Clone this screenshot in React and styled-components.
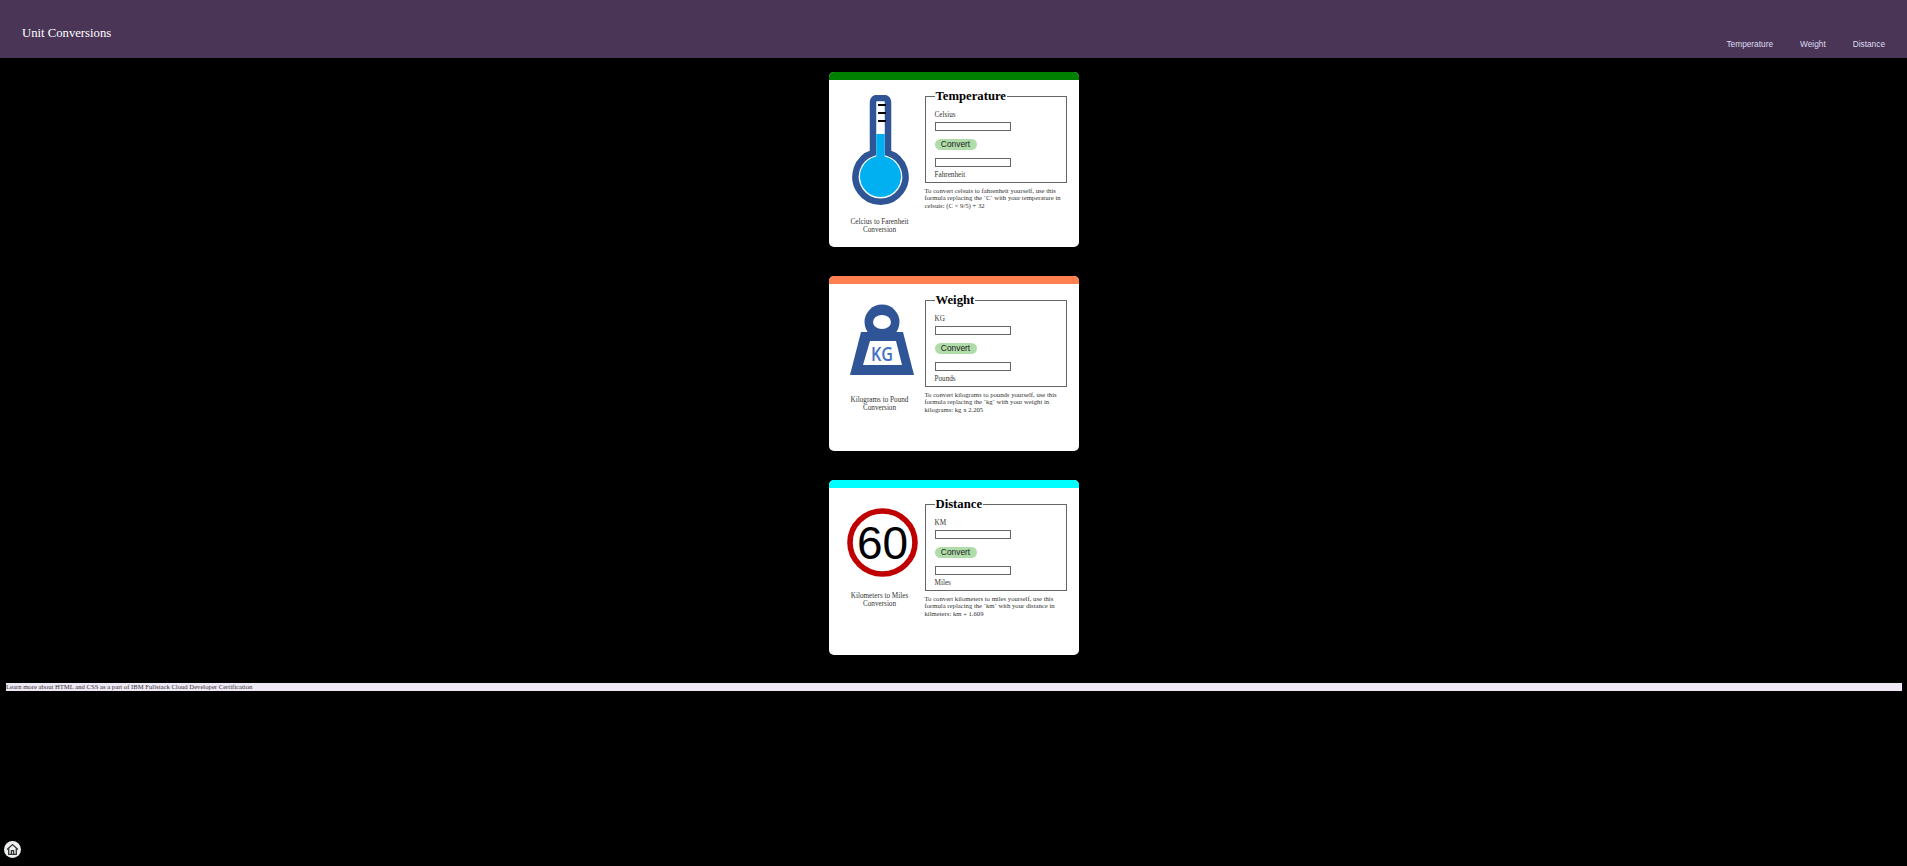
import React from 'react';
import styled, { createGlobalStyle } from 'styled-components';

const GlobalStyle = createGlobalStyle`
  html, body {
    margin: 0;
    padding: 0;
    background: #000;
    font-family: "Liberation Serif", serif;
  }
`;

const Page = styled.div`
  min-height: 866px;
  background: #000;
`;

const Header = styled.header`
  display: flex;
  justify-content: space-between;
  height: 58px;
  padding: 0 22px;
  box-sizing: border-box;
  background: #4b3557;
`;

const Title = styled.h1`
  margin: 25px 0 0;
  font-size: 12.7px;
  line-height: 16px;
  font-weight: normal;
  color: #fff;
`;

const Nav = styled.nav`
  display: flex;
  gap: 27px;
  padding-top: 39px;
`;

const NavLink = styled.a`
  font-family: "Liberation Sans", sans-serif;
  font-size: 8.3px;
  line-height: 11px;
  color: #dcdcf0;
`;

const Main = styled.main`
  display: flex;
  flex-direction: column;
  align-items: center;
  gap: 29px;
  padding-top: 14px;
`;

const Card = styled.section`
  width: 250px;
  height: 175px;
  border-radius: 5px;
  overflow: hidden;
  background: #fff;
`;

const CardBar = styled.div`
  height: 8px;
  background: ${(p) => p.$color};
`;

const CardBody = styled.div`
  display: grid;
  grid-template-columns: 96px 142px;
  padding-top: 9px;
`;

const IconColumn = styled.div`
  display: flex;
  flex-direction: column;
  align-items: center;
  padding-left: 6px;
  padding-top: ${(p) => p.$top}px;
`;

const IconFrame = styled.div`
  display: flex;
  margin-left: ${(p) => p.$shift}px;
`;

const Caption = styled.p`
  width: 70px;
  margin: ${(p) => p.$gap}px 0 0;
  font-size: 7.2px;
  line-height: 8px;
  text-align: center;
  color: #333;
`;

const FormColumn = styled.div`
  display: flex;
  flex-direction: column;
`;

const Fields = styled.fieldset`
  display: flex;
  flex-direction: column;
  align-items: flex-start;
  height: 94px;
  margin: 0;
  padding: 0 0 0 9px;
  box-sizing: border-box;
  border: 1px solid #666;
`;

const Legend = styled.legend`
  padding: 0 1px;
  font-size: 12.7px;
  line-height: 15px;
  font-weight: bold;
  color: #000;
`;

const FieldLabel = styled.label`
  font-size: 7.2px;
  line-height: 8px;
  color: #333;
  margin-top: ${(p) => p.$top}px;
`;

const Field = styled.input`
  display: block;
  width: 76px;
  height: 9px;
  margin-top: ${(p) => p.$top}px;
  padding: 0;
  box-sizing: border-box;
  border: 1px solid #666;
  background: #fff;
`;

const ConvertButton = styled.button`
  width: 42px;
  height: 10.5px;
  margin-top: 8px;
  padding: 0;
  border: 0;
  border-radius: 6px;
  background: #b0dcaa;
  font-family: "Liberation Sans", sans-serif;
  font-size: 8.4px;
  line-height: 10.5px;
  color: #222;
`;

const Help = styled.p`
  margin: 4px 0 0;
  font-size: 6.7px;
  line-height: 7.3px;
  color: #333;
`;

const Footer = styled.footer`
  margin: 28px 5px 0 6px;
  background: #efe8f5;
  font-size: 6.66px;
  line-height: 8px;
  color: #333;
`;

const HomeButton = styled.div`
  position: fixed;
  left: 4px;
  bottom: 8px;
  display: flex;
  align-items: center;
  justify-content: center;
  width: 17px;
  height: 17px;
  border-radius: 50%;
  background: #eef1ef;
`;

function Thermometer() {
  return (
    <svg width="58" height="111" viewBox="0 0 58 111">
      <path
        d="M21 57.85V7a4 4 0 0 1 4-4h7a4 4 0 0 1 4 4V57.85A25 25 0 1 1 21 57.85z"
        fill="#fff"
        stroke="#2f5597"
        strokeWidth="6.5"
      />
      <path d="M24.25 39h8.5V61.5A20.5 20.5 0 1 1 24.25 61.5z" fill="#00b0f0" />
      <path d="M26 10h8M26 18h8M26 26h8" stroke="#000" strokeWidth="2" />
    </svg>
  );
}

function WeightIcon() {
  return (
    <svg width="64" height="71" viewBox="0 0 64 71">
      <circle cx="32" cy="18" r="17.5" fill="#2f5597" />
      <ellipse cx="32" cy="18" rx="9" ry="7" fill="#fff" />
      <path d="M11 28h42l11 43H0z" fill="#2f5597" />
      <path d="M20 37h26l6 24H13z" fill="#fff" />
      <text x="32" y="56.7" textAnchor="middle" fontFamily="Open Sans, sans-serif" fontWeight="600" fontSize="20" textLength="22" lengthAdjust="spacingAndGlyphs" fill="#4472c4">KG</text>
    </svg>
  );
}

function SpeedSign() {
  return (
    <svg width="71" height="69" viewBox="0 0 71 69">
      <ellipse cx="35.5" cy="34.5" rx="32.5" ry="31.5" fill="#fff" stroke="#c00000" strokeWidth="5.6" />
      <text x="35.5" y="50.5" textAnchor="middle" fontFamily="Liberation Sans, sans-serif" fontSize="46" fill="#000">60</text>
    </svg>
  );
}

const cards = [
  {
    color: '#008000',
    iconTop: 6,
    iconShift: 2,
    icon: <Thermometer />,
    captionGap: 12,
    caption: 'Celcius to Farenheit Conversion',
    legend: 'Temperature',
    from: 'Celsius',
    to: 'Fahrenheit',
    help: 'To convert celsuis to fahrenheit yourself, use this formula replacing the `C` with your temperature in celsuis: (C × 9/5) + 32',
  },
  {
    color: '#ff7f50',
    iconTop: 11,
    iconShift: 5,
    icon: <WeightIcon />,
    captionGap: 21,
    caption: 'Kilograms to Pound Conversion',
    legend: 'Weight',
    from: 'KG',
    to: 'Pounds',
    help: 'To convert kilograms to pounds yourself, use this formula replacing the `kg` with your weight in kilograms: kg x 2.205',
  },
  {
    color: '#00ffff',
    iconTop: 11,
    iconShift: 5,
    icon: <SpeedSign />,
    captionGap: 15,
    caption: 'Kilometers to Miles Conversion',
    legend: 'Distance',
    from: 'KM',
    to: 'Miles',
    help: 'To convert kilometers to miles yourself, use this formula replacing the `km` with your distance in kilmeters: km ÷ 1.609',
  },
];

export default function App() {
  return (
    <Page>
      <GlobalStyle />
      <Header>
        <Title>Unit Conversions</Title>
        <Nav>
          <NavLink>Temperature</NavLink>
          <NavLink>Weight</NavLink>
          <NavLink>Distance</NavLink>
        </Nav>
      </Header>
      <Main>
        {cards.map((card) => (
          <Card key={card.legend}>
            <CardBar $color={card.color} />
            <CardBody>
              <IconColumn $top={card.iconTop}>
                <IconFrame $shift={card.iconShift}>{card.icon}</IconFrame>
                <Caption $gap={card.captionGap}>{card.caption}</Caption>
              </IconColumn>
              <FormColumn>
                <Fields>
                  <Legend>{card.legend}</Legend>
                  <FieldLabel $top={7}>{card.from}</FieldLabel>
                  <Field $top={3} />
                  <ConvertButton>Convert</ConvertButton>
                  <Field $top={8} />
                  <FieldLabel $top={4}>{card.to}</FieldLabel>
                </Fields>
                <Help>{card.help}</Help>
              </FormColumn>
            </CardBody>
          </Card>
        ))}
      </Main>
      <Footer>Learn more about HTML and CSS as a part of IBM Fullstack Cloud Developer Certification</Footer>
      <HomeButton>
        <svg width="13" height="13" viewBox="0 0 24 24" fill="none" stroke="#333" strokeWidth="2.4">
          <path d="M2 12 12 3l10 9" />
          <path d="M5 10v11h14V10" />
          <path d="M10 21v-7h4v7" />
        </svg>
      </HomeButton>
    </Page>
  );
}
